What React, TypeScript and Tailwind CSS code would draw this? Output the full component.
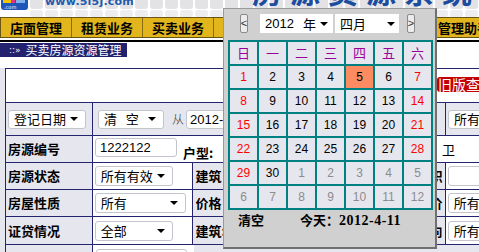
import React from 'react';

const cjk = "font-['Noto_Sans_CJK_SC',sans-serif]";

function Arrow() {
  return <span className="ml-auto w-0 h-0 border-x-[4px] border-x-transparent border-t-[4px] border-t-black" />;
}

function Sel({ className = '', children }: { className?: string; children: React.ReactNode }) {
  return (
    <div className={`flex items-center bg-white border border-[#c4c4cc] rounded-[3px] pl-[5px] pr-[7px] text-[13px] leading-[16px] text-black whitespace-nowrap ${className}`}>
      <span>{children}</span>
      <Arrow />
    </div>
  );
}

const weekdays = ['日', '一', '二', '三', '四', '五', '六'];

const days = Array.from({ length: 42 }, (_, i) => {
  const current = i < 30;
  const day = current ? i + 1 : i - 29;
  const dow = i % 7;
  let color = 'text-black';
  if (!current) color = 'text-[#8c8c8c]';
  else if (dow === 0 || dow === 6) color = 'text-[#ff0000]';
  const bg = current && day === 5 ? 'bg-[#fc8b61]' : 'bg-[#e6e6ee]';
  return { day, color, bg };
});

function Calendar() {
  return (
    <div className="absolute left-[223px] top-[8px] w-[214px] h-[241px] bg-[#d0d0d0] border border-[#9a9a9a] border-r-2 border-b-2 border-r-[#707070] border-b-[#707070] pl-[4px] pt-[5px] z-10">
      <div className="flex items-center h-[19px]">
        <div className="ml-[12px] w-[8px] h-[19px] border border-[#8a8a8a] rounded-[2px] bg-[#ececec] flex items-center justify-center text-[11px] leading-none text-[#333] font-['Liberation_Sans',sans-serif]">
          &lt;
        </div>
        <div className="ml-[12px] w-[73px] h-[19px] bg-white flex items-center pl-[5px] pr-[5px] text-[13px] leading-none">
          <span className="font-['Liberation_Sans',sans-serif]">2012</span>
          <span className={`ml-[9px] ${cjk}`}>年</span>
          <Arrow />
        </div>
        <div className={`ml-[2px] w-[64px] h-[19px] bg-white flex items-center pl-[5px] pr-[4px] text-[13px] leading-none ${cjk}`}>
          <span>四月</span>
          <Arrow />
        </div>
        <div className="ml-[8px] w-[8px] h-[19px] border border-[#8a8a8a] rounded-[2px] bg-[#ececec] flex items-center justify-center text-[11px] leading-none text-[#333] font-['Liberation_Sans',sans-serif]">
          &gt;
        </div>
      </div>
      <div className="mt-[7px] w-[205px] bg-[#008080] p-[2px] grid grid-cols-[repeat(7,27px)] auto-rows-[22px] gap-[2px]">
        {weekdays.map(w => (
          <div key={w} className={`bg-[#e6e6ee] flex items-center justify-center text-[13px] text-[#990099] ${cjk}`}>
            {w}
          </div>
        ))}
        {days.map((d, i) => (
          <div key={i} className={`${d.bg} ${d.color} flex items-center justify-center text-[12px] font-['Liberation_Sans',sans-serif]`}>
            {d.day}
          </div>
        ))}
      </div>
      <div className="flex mt-[4px] pl-[10px] text-[13px] leading-[14px] font-bold text-black font-['Liberation_Serif','Noto_Sans_CJK_SC',serif]">
        <span className="w-[62px]">清空</span>
        <span>今天：<span className="text-[14px] tracking-[0.5px]">2012-4-11</span></span>
      </div>
    </div>
  );
}

function Header() {
  const tiles = Array.from({ length: 34 });
  return (
    <div className="relative h-[17px] overflow-hidden bg-white">
      <div className="flex gap-[2px] pl-[30px]">
        {tiles.map((_, i) => (
          <div key={i} className="w-[13px] h-[9px] shrink-0 rounded-b-[3px] bg-[#e3e3e6]" />
        ))}
      </div>
      <div className="flex gap-[2px] pl-[30px] mt-[1px]">
        {tiles.map((_, i) => (
          <div key={i} className="w-[13px] h-[7px] shrink-0 rounded-[3px] bg-[#ededf0]" />
        ))}
      </div>
      <svg className="absolute left-0 top-0" width="29" height="11" viewBox="0 0 29 11">
        <rect x="1" y="-6" width="27" height="16" rx="3" fill="#1d58b8" />
        <rect x="3" y="-2" width="8" height="5" fill="#f4c300" />
        <rect x="11" y="-2" width="4" height="5" fill="#e0308a" />
        <rect x="16" y="-2" width="9" height="5" fill="#7fb2ea" />
        <text x="4" y="9" fontSize="5" fill="#ffffff" fontFamily="DejaVu Sans">.com</text>
      </svg>
      <div className="absolute left-[45px] top-[-4px] text-[11px] leading-[12px] font-bold text-[#1f5cae] font-['DejaVu_Sans',sans-serif] tracking-[0.2px]">
        www.5i5j.com
      </div>
      <div className={`absolute left-[252px] top-[-25px] text-[30px] leading-[30px] font-bold text-[#1c4c9e] tracking-[8px] whitespace-nowrap ${cjk}`}>
        房源资源系统
      </div>
    </div>
  );
}

function Nav() {
  const item = 'shrink-0 h-full flex items-center justify-center border-r border-[#8a6c10] text-[13px] font-bold text-black';
  return (
    <div className={`flex h-[21px] w-[620px] border-y border-l border-[#6a5512] bg-[#e2b51d] ${cjk}`}>
      <div className={`${item} w-[71px]`}>店面管理</div>
      <div className={`${item} w-[71px]`}>租赁业务</div>
      <div className={`${item} w-[71px]`}>买卖业务</div>
      <div className={`${item} w-[71px]`}>客户管理</div>
      <div className={`${item} w-[71px]`}>统计报表</div>
      <div className={`${item} w-[81px]`}>系统设置</div>
      <div className="shrink-0 h-full flex items-center pl-[1px] text-[13px] font-bold text-black">管理助手</div>
    </div>
  );
}

const cellR = 'border-r border-[#25256f]';
const label = `font-bold text-[13px] text-black ${cjk}`;

function FormTable() {
  return (
    <div className="bg-[#e6e6ee] pl-[5px] h-[184px]">
      <div className={`w-[640px] border-l border-t border-[#25256f] ${cjk}`}>
        <div className="flex items-start h-[34px] bg-white border-b border-[#25256f] pt-[8px] pl-[431px]">
          <div className="h-[15px] bg-[#c40000] rounded-[3px] px-[1px] text-white text-[14px] leading-[15px] whitespace-nowrap">
            旧版查询
          </div>
        </div>

        <div className="flex h-[33px] border-b border-[#25256f]">
          <div className={`w-[87px] ${cellR} flex items-center pl-[2px]`}>
            <Sel className="w-[78px] h-[19px]">登记日期</Sel>
          </div>
          <div className="w-[344px] shrink-0 flex items-center pl-[5px]">
            <Sel className="w-[66px] h-[19px]">清&nbsp;&nbsp;&nbsp;空</Sel>
            <span className="ml-[8px] text-[12px] font-light text-[#333]">从</span>
            <div className="ml-[2px] w-[100px] h-[19px] bg-white border border-[#c4c4cc] rounded-[3px] pl-[3px] text-[13px] leading-[17px] font-['Liberation_Sans',sans-serif]">
              2012-04-01
            </div>
          </div>
          <div className={`w-[9px] shrink-0 ${cellR}`} />
          <div className="flex items-center pl-[2px]">
            <Sel className="w-[80px] h-[19px]">所有</Sel>
          </div>
        </div>

        <div className="flex h-[27px] border-b border-[#25256f]">
          <div className={`w-[87px] ${cellR} flex items-center pl-[2px] ${label}`}>房源编号</div>
          <div className="flex-1 bg-white flex items-start pt-[2px]">
            <div className="ml-[2px] w-[82px] h-[19px] bg-white border border-[#c4c4cc] rounded-[3px] pl-[4px] text-[13px] leading-[17px] font-['Liberation_Sans',sans-serif]">
              1222122
            </div>
            <div className={`ml-[6px] mt-[8px] w-[259px] leading-[14px] ${label}`}>户型:</div>
            <div className="mt-[5px] text-[13px] leading-[14px]">卫</div>
          </div>
        </div>

        {[
          { l: '房源状态', v: '所有有效', w: 'w-[78px]', l2: '建筑', l3: '使用面积', right: 'input' },
          { l: '房屋性质', v: '所有', w: 'w-[91px]', l2: '价格', l3: '单价', right: 'sel' },
          { l: '证贷情况', v: '全部', w: 'w-[78px]', l2: '建筑:', l3: '朝向', right: 'sel' },
        ].map((r, i) => (
          <div key={r.l} className={`flex ${i === 2 ? 'h-[28px]' : 'h-[27px]'} border-b border-[#25256f]`}>
            <div className={`w-[87px] ${cellR} flex items-center pl-[2px] ${label}`}>{r.l}</div>
            <div className={`w-[101px] ${cellR} bg-white flex items-center pl-[2px]`}>
              <Sel className={`${r.w} h-[20px]`}>{r.v}</Sel>
            </div>
            <div className={`w-[61px] ${cellR} flex items-center pl-[2px] ${label}`}>{r.l2}</div>
            <div className={`w-[126px] ${cellR} bg-white`} />
            <div className={`w-[66px] ${cellR} flex items-center justify-end overflow-hidden whitespace-nowrap pr-[2px] ${label}`}>{r.l3}</div>
            <div className="w-[200px] bg-white flex items-center pl-[2px]">
              {r.right === 'input' ? (
                <div className="w-[80px] h-[20px] bg-white border border-[#c4c4cc] rounded-[3px]" />
              ) : (
                <Sel className="w-[80px] h-[20px]">所有</Sel>
              )}
            </div>
          </div>
        ))}

        <div className="flex h-[27px]">
          <div className={`w-[87px] ${cellR} flex items-center pl-[4px] ${label}`}>房屋用途</div>
          <div className="w-[101px] bg-white pt-[4px] pl-[3px]">
            <Sel className="w-[91px] h-[20px]">所有</Sel>
          </div>
        </div>
      </div>
    </div>
  );
}

export default function App() {
  return (
    <div className="relative w-[479px] h-[252px] overflow-hidden bg-white">
      <Header />
      <Nav />
      <div className="h-[2px]" />
      <div className="h-[2px] w-[640px] bg-black" />
      <div className="h-[1px]" />
      <div className="flex items-center w-[127px] h-[14px] bg-[#22226e] text-white">
        <span className="ml-[9px] text-[9px] leading-none font-['DejaVu_Sans',sans-serif]">::»</span>
        <span className={`ml-[5px] text-[12px] leading-[14px] whitespace-nowrap ${cjk}`}>买卖房源资源管理</span>
      </div>
      <div className="h-[11px]" />
      <FormTable />
      <Calendar />
    </div>
  );
}
